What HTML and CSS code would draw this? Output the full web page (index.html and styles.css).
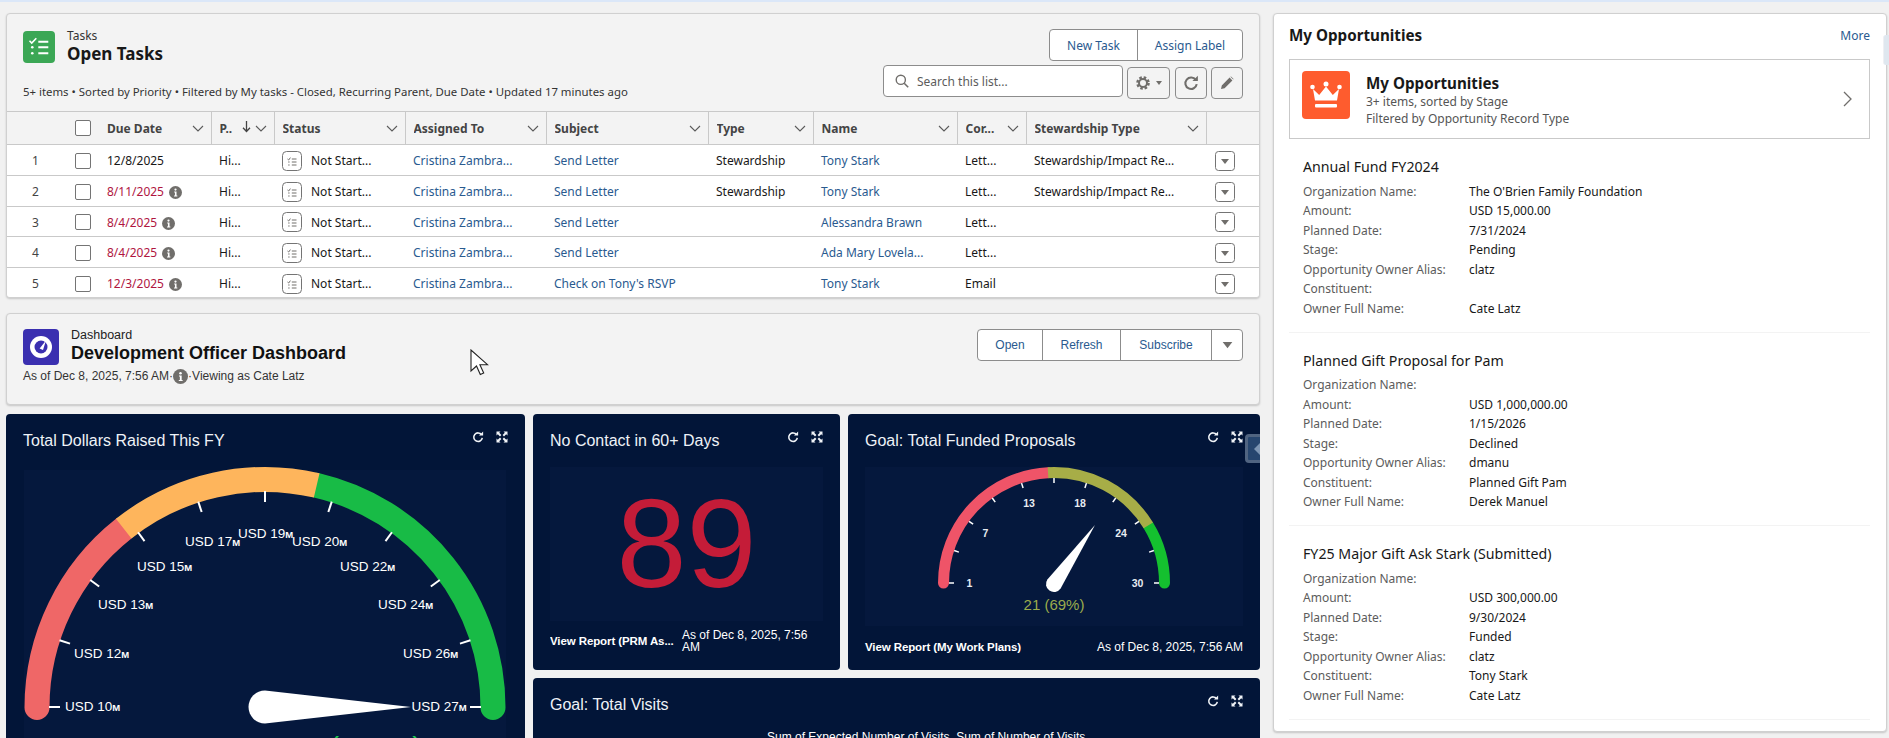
FILE: index.html
```html
<!DOCTYPE html>
<html lang="en">
<head>
<meta charset="utf-8">
<title>Home</title>
<link rel="stylesheet" href="styles.css">
</head>
<body>
<svg class="sym" width="0" height="0" aria-hidden="true">
  <symbol id="chev" viewBox="0 0 12 7"><path d="M1 1l5 5 5-5" fill="none" stroke="currentColor" stroke-width="1.1"/></symbol>
  <symbol id="refresh" viewBox="0 0 14 14"><path d="M11.2 4.4A5 5 0 1 0 12 8" fill="none" stroke="currentColor" stroke-width="1.8"/><path d="M8.2 5.2h4.8V.6z" fill="currentColor"/></symbol>
  <symbol id="expand" viewBox="0 0 12 12"><path d="M.5.5h4L3.2 1.8 5.4 4 4 5.4 1.8 3.2.5 4.5zM11.500.5v4L10.200 3.200 8 5.400 6.600 4 8.800 1.800 7.500.5zM.5 11.500v-4l1.300 1.300L4 6.600 5.400 8 3.200 10.200 4.500 11.500zM11.500 11.500h-4l1.300-1.300L6.600 8 8 6.600l2.200 2.200 1.300-1.300z" fill="currentColor"/></symbol>
  <symbol id="info" viewBox="0 0 14 14"><circle cx="7" cy="7" r="7" fill="#706e6b"/><circle cx="7" cy="3.900" r="1.200" fill="#fff"/><path d="M5.600 6h2.500v4.200H9v1.100H5.400v-1.100h1V7.100H5.600z" fill="#fff"/></symbol>
  <symbol id="stat" viewBox="0 0 20 20"><rect x=".5" y=".5" width="19" height="19" rx="4" fill="#fff" stroke="#747474"/><path d="M5.500 8l1.200 1 1.700-2.400M9.800 8h4.700M9.800 11h4.700M9.800 14h4.700M6.200 11h1.400M6.200 14h1.400" fill="none" stroke="#706e6b" stroke-width="1"/></symbol>
  <symbol id="caret" viewBox="0 0 20 20"><rect x=".5" y=".5" width="19" height="19" rx="3" fill="#fff" stroke="#747474"/><path d="M6 8h8l-4 5z" fill="#706e6b"/></symbol>
</svg>

<div class="page">
  <main class="left">
    <section class="card tasks">
      <header class="tasks-head">
        <div class="tasks-title">
          <div class="title-row">
            <svg class="app-icon" viewBox="0 0 32 32"><rect width="32" height="32" rx="4" fill="#3ba755"/><path d="M6.500 9.800l2.200 2.200 4.600-4.800" fill="none" stroke="#fff" stroke-width="1.600"/><path d="M15.300 10.700h10M15.300 16.300h10M15.300 22.300h10" stroke="#fff" stroke-width="2"/><circle cx="9.300" cy="16.300" r="1.300" fill="#fff"/><circle cx="9.300" cy="22.300" r="1.300" fill="#fff"/></svg>
            <div class="title-text">
              <div class="eyebrow">Tasks</div>
              <h1 class="tasks-name">Open Tasks</h1>
            </div>
          </div>
          <p class="tasks-meta">5+ items • Sorted by Priority • Filtered by My tasks - Closed, Recurring Parent, Due Date • Updated 17 minutes ago</p>
        </div>
        <div class="tasks-tools">
          <div class="btn-group">
            <a class="btn w-new">New Task</a><a class="btn w-assign">Assign Label</a>
          </div>
          <div class="tool-row">
            <div class="search">
              <svg class="search-ico" viewBox="0 0 14 14"><circle cx="5.800" cy="5.800" r="4.600" fill="none" stroke="#706e6b" stroke-width="1.400"/><path d="M9.200 9.200l4 4" stroke="#706e6b" stroke-width="1.600"/></svg>
              <span>Search this list...</span>
            </div>
            <div class="icon-btn gear">
              <svg class="ico16" viewBox="0 0 16 16"><circle cx="8" cy="8" r="5.500" fill="none" stroke="#706e6b" stroke-width="2.600" stroke-dasharray="2.500 1.820"/><circle cx="8" cy="8" r="4" fill="none" stroke="#706e6b" stroke-width="2"/></svg>
              <svg class="mini-caret" viewBox="0 0 8 5"><path d="M1 0h6L4 4z" fill="#706e6b"/></svg>
            </div>
            <div class="icon-btn refresh-btn"><svg class="ico16 grey"><use href="#refresh"/></svg></div>
            <div class="icon-btn edit-btn"><svg class="ico14" viewBox="0 0 14 14"><path d="M1 13l.8-3.600L9.600 1.600l2.800 2.800-7.800 7.800zM10.400.8l.6-.4 2.600 2.600-.4.6z" fill="#706e6b"/></svg></div>
          </div>
        </div>
      </header>

      <table class="grid">
        <colgroup>
          <col class="c-num"><col class="c-chk"><col class="c-due"><col class="c-pri"><col class="c-sta"><col class="c-asg"><col class="c-sub"><col class="c-typ"><col class="c-nam"><col class="c-cor"><col class="c-ste"><col class="c-act">
        </colgroup>
        <thead>
          <tr>
            <th></th>
            <th class="chk"><span class="box"></span></th>
            <th class="plain"><div class="th"><span>Due Date</span><svg class="chev"><use href="#chev"/></svg></div></th>
            <th><div class="th"><span>P..</span><svg class="sort" viewBox="0 0 9 12"><path d="M4.500 0v10M1 6.800l3.500 3.700L8 6.800" fill="none" stroke="#444" stroke-width="1.300"/></svg><svg class="chev"><use href="#chev"/></svg></div></th>
            <th><div class="th"><span>Status</span><svg class="chev"><use href="#chev"/></svg></div></th>
            <th><div class="th"><span>Assigned To</span><svg class="chev"><use href="#chev"/></svg></div></th>
            <th><div class="th"><span>Subject</span><svg class="chev"><use href="#chev"/></svg></div></th>
            <th><div class="th"><span>Type</span><svg class="chev"><use href="#chev"/></svg></div></th>
            <th><div class="th"><span>Name</span><svg class="chev"><use href="#chev"/></svg></div></th>
            <th><div class="th"><span>Cor...</span><svg class="chev"><use href="#chev"/></svg></div></th>
            <th><div class="th"><span>Stewardship Type</span><svg class="chev"><use href="#chev"/></svg></div></th>
            <th></th>
          </tr>
        </thead>
        <tbody>
          <tr>
            <td class="num">1</td><td class="chk"><span class="box"></span></td><td class="due">12/8/2025</td><td class="cell">Hi...</td>
            <td class="cell"><span class="status"><svg class="ico20"><use href="#stat"/></svg>Not Start...</span></td>
            <td class="cell"><a class="lnk">Cristina Zambra...</a></td><td class="cell"><a class="lnk">Send Letter</a></td><td class="cell">Stewardship</td>
            <td class="cell"><a class="lnk">Tony Stark</a></td><td class="cell">Lett...</td><td class="cell">Stewardship/Impact Re...</td><td class="act"><svg class="ico20"><use href="#caret"/></svg></td>
          </tr>
          <tr>
            <td class="num">2</td><td class="chk"><span class="box"></span></td><td class="due late">8/11/2025<svg class="info"><use href="#info"/></svg></td><td class="cell">Hi...</td>
            <td class="cell"><span class="status"><svg class="ico20"><use href="#stat"/></svg>Not Start...</span></td>
            <td class="cell"><a class="lnk">Cristina Zambra...</a></td><td class="cell"><a class="lnk">Send Letter</a></td><td class="cell">Stewardship</td>
            <td class="cell"><a class="lnk">Tony Stark</a></td><td class="cell">Lett...</td><td class="cell">Stewardship/Impact Re...</td><td class="act"><svg class="ico20"><use href="#caret"/></svg></td>
          </tr>
          <tr class="short">
            <td class="num">3</td><td class="chk"><span class="box"></span></td><td class="due late">8/4/2025<svg class="info"><use href="#info"/></svg></td><td class="cell">Hi...</td>
            <td class="cell"><span class="status"><svg class="ico20"><use href="#stat"/></svg>Not Start...</span></td>
            <td class="cell"><a class="lnk">Cristina Zambra...</a></td><td class="cell"><a class="lnk">Send Letter</a></td><td class="cell"></td>
            <td class="cell"><a class="lnk">Alessandra Brawn</a></td><td class="cell">Lett...</td><td class="cell"></td><td class="act"><svg class="ico20"><use href="#caret"/></svg></td>
          </tr>
          <tr>
            <td class="num">4</td><td class="chk"><span class="box"></span></td><td class="due late">8/4/2025<svg class="info"><use href="#info"/></svg></td><td class="cell">Hi...</td>
            <td class="cell"><span class="status"><svg class="ico20"><use href="#stat"/></svg>Not Start...</span></td>
            <td class="cell"><a class="lnk">Cristina Zambra...</a></td><td class="cell"><a class="lnk">Send Letter</a></td><td class="cell"></td>
            <td class="cell"><a class="lnk">Ada Mary Lovela...</a></td><td class="cell">Lett...</td><td class="cell"></td><td class="act"><svg class="ico20"><use href="#caret"/></svg></td>
          </tr>
          <tr class="last">
            <td class="num">5</td><td class="chk"><span class="box"></span></td><td class="due late">12/3/2025<svg class="info"><use href="#info"/></svg></td><td class="cell">Hi...</td>
            <td class="cell"><span class="status"><svg class="ico20"><use href="#stat"/></svg>Not Start...</span></td>
            <td class="cell"><a class="lnk">Cristina Zambra...</a></td><td class="cell"><a class="lnk">Check on Tony's RSVP</a></td><td class="cell"></td>
            <td class="cell"><a class="lnk">Tony Stark</a></td><td class="cell">Email</td><td class="cell"></td><td class="act"><svg class="ico20"><use href="#caret"/></svg></td>
          </tr>
        </tbody>
      </table>
    </section>

    <section class="card dash-head">
      <div class="dash-title">
        <div class="title-row">
          <svg class="dash-icon" viewBox="0 0 36 36"><rect width="36" height="36" rx="4" fill="#3a2fb0"/><circle cx="18" cy="18" r="11" fill="#fff"/><circle cx="18" cy="18" r="6.500" fill="#3a2fb0"/><path d="M23 11.500l-3 9.500-3.400-1.500z" fill="#fff"/></svg>
          <div class="dash-text">
            <div class="dash-eyebrow">Dashboard</div>
            <h2 class="dash-name">Development Officer Dashboard</h2>
          </div>
        </div>
        <p class="dash-meta">As of Dec 8, 2025, 7:56 AM·<svg class="info dash-info"><use href="#info"/></svg>·Viewing as Cate Latz</p>
      </div>
      <div class="btn-group arial">
        <a class="btn w-open">Open</a><a class="btn w-refresh">Refresh</a><a class="btn w-sub">Subscribe</a><a class="btn w-more"><svg class="mini-caret big" viewBox="0 0 8 5"><path d="M.5 0h7L4 4.500z" fill="#706e6b"/></svg></a>
      </div>
    </section>

    <section class="widgets">
      <article class="widget w1">
        <header class="w-head"><h3>Total Dollars Raised This FY</h3><div class="w-icons"><svg class="wi"><use href="#refresh"/></svg><svg class="wi"><use href="#expand"/></svg></div></header>
        <svg class="gauge" viewBox="6 466 519 272">
          <rect class="panel" x="24" y="470" width="482" height="268"/>
          <path d="M37 707.500A228 228 0 0 1 123.700 528.600" class="arc a-red" stroke-linecap="round"/>
          <path d="M316.700 485.400A228 228 0 0 1 493 707.500" class="arc a-green" stroke-linecap="round"/>
          <path d="M123.700 528.600A228 228 0 0 1 316.700 485.400" class="arc a-orange"/>
          <g class="ticks">
            <line x1="265" y1="491" x2="265" y2="502" transform="rotate(-90 265 707)"/>
            <line x1="265" y1="491" x2="265" y2="502" transform="rotate(-72 265 707)"/>
            <line x1="265" y1="491" x2="265" y2="502" transform="rotate(-54 265 707)"/>
            <line x1="265" y1="491" x2="265" y2="502" transform="rotate(-36 265 707)"/>
            <line x1="265" y1="491" x2="265" y2="502" transform="rotate(-18 265 707)"/>
            <line x1="265" y1="491" x2="265" y2="502"/>
            <line x1="265" y1="491" x2="265" y2="502" transform="rotate(18 265 707)"/>
            <line x1="265" y1="491" x2="265" y2="502" transform="rotate(36 265 707)"/>
            <line x1="265" y1="491" x2="265" y2="502" transform="rotate(54 265 707)"/>
            <line x1="265" y1="491" x2="265" y2="502" transform="rotate(72 265 707)"/>
            <line x1="265" y1="491" x2="265" y2="502" transform="rotate(90 265 707)"/>
          </g>
          <path d="M411 707L265 690.500A16.500 16.500 0 0 0 265 723.500Z" fill="#fff"/>
          <g class="g1-labels">
            <text x="65" y="711">USD 10<tspan class="m">M</tspan></text>
            <text x="74" y="658">USD 12<tspan class="m">M</tspan></text>
            <text x="98" y="609">USD 13<tspan class="m">M</tspan></text>
            <text x="137" y="571">USD 15<tspan class="m">M</tspan></text>
            <text x="185" y="546">USD 17<tspan class="m">M</tspan></text>
            <text x="238" y="538">USD 19<tspan class="m">M</tspan></text>
            <text x="292" y="546">USD 20<tspan class="m">M</tspan></text>
            <text x="340" y="571">USD 22<tspan class="m">M</tspan></text>
            <text x="378" y="609">USD 24<tspan class="m">M</tspan></text>
            <text x="403" y="658">USD 26<tspan class="m">M</tspan></text>
            <text x="411.500" y="711">USD 27<tspan class="m">M</tspan></text>
          </g>
          <text x="262.500" y="757.500" class="g1-value">USD 27,446,205 (113%)</text>
        </svg>
      </article>

      <article class="widget w2">
        <header class="w-head"><h3>No Contact in 60+ Days</h3><div class="w-icons"><svg class="wi"><use href="#refresh"/></svg><svg class="wi"><use href="#expand"/></svg></div></header>
        <div class="metric">89</div>
        <footer class="w-foot"><span class="report trunc">View Report (PRM As...</span><span class="asof wrap">As of Dec 8, 2025, 7:56 AM</span></footer>
      </article>

      <article class="widget w3">
        <header class="w-head"><h3>Goal: Total Funded Proposals</h3><div class="w-icons"><svg class="wi"><use href="#refresh"/></svg><svg class="wi"><use href="#expand"/></svg></div></header>
        <svg class="gauge2" viewBox="848 466 412 160">
          <rect class="panel" x="865" y="467" width="378" height="159"/>
          <path d="M943.500 583A110.500 110.500 0 0 1 1048 472.700" class="arc2 a2-red" stroke-linecap="round"/>
          <path d="M1148.300 525.400A110.500 110.500 0 0 1 1164.500 583" class="arc2 a2-green" stroke-linecap="round"/>
          <path d="M1048 472.700A110.500 110.500 0 0 1 1148.300 525.400" class="arc2 a2-olive"/>
          <g class="ticks2">
            <line x1="1054" y1="478" x2="1054" y2="483" transform="rotate(-90 1054 583)"/>
            <line x1="1054" y1="478" x2="1054" y2="483" transform="rotate(-72 1054 583)"/>
            <line x1="1054" y1="478" x2="1054" y2="483" transform="rotate(-54 1054 583)"/>
            <line x1="1054" y1="478" x2="1054" y2="483" transform="rotate(-36 1054 583)"/>
            <line x1="1054" y1="478" x2="1054" y2="483" transform="rotate(-18 1054 583)"/>
            <line x1="1054" y1="478" x2="1054" y2="483"/>
            <line x1="1054" y1="478" x2="1054" y2="483" transform="rotate(18 1054 583)"/>
            <line x1="1054" y1="478" x2="1054" y2="483" transform="rotate(36 1054 583)"/>
            <line x1="1054" y1="478" x2="1054" y2="483" transform="rotate(54 1054 583)"/>
            <line x1="1054" y1="478" x2="1054" y2="483" transform="rotate(72 1054 583)"/>
            <line x1="1054" y1="478" x2="1054" y2="483" transform="rotate(90 1054 583)"/>
          </g>
          <path d="M1095 525L1060.600 588.600A8 8 0 0 1 1047.400 579.400Z" fill="#fff"/>
          <g class="g2-labels">
            <text x="969.500" y="587">1</text>
            <text x="985.500" y="537">7</text>
            <text x="1029" y="507">13</text>
            <text x="1080" y="507">18</text>
            <text x="1121" y="537">24</text>
            <text x="1137.500" y="587">30</text>
          </g>
          <text x="1054" y="609.500" class="g2-value">21 (69%)</text>
        </svg>
        <footer class="w-foot split"><span class="report">View Report (My Work Plans)</span><span class="asof">As of Dec 8, 2025, 7:56 AM</span></footer>
        <div class="side-tab"><svg class="tab-arrow" viewBox="0 0 6 12"><path d="M6 0v12L0 6z" fill="#7d95b3"/></svg></div>
      </article>

      <article class="widget w4">
        <header class="w-head"><h3>Goal: Total Visits</h3><div class="w-icons"><svg class="wi"><use href="#refresh"/></svg><svg class="wi"><use href="#expand"/></svg></div></header>
        <div class="legend">Sum of Expected Number of Visits, Sum of Number of Visits</div>
      </article>
    </section>
  </main>

  <aside class="card opp">
    <header class="opp-head"><h2>My Opportunities</h2><a class="lnk">More</a></header>
    <div class="opp-box">
      <svg class="crown" viewBox="0 0 48 48"><rect width="48" height="48" rx="4" fill="#fe5c2e"/><path d="M11 18l6.200 6L24 15.500 30.800 24l6.200-6-2 11.500H13z" fill="#fff"/><circle cx="10.500" cy="16" r="2.300" fill="#fff"/><circle cx="24" cy="13" r="2.500" fill="#fff"/><circle cx="37.500" cy="16" r="2.300" fill="#fff"/><rect x="13" y="33" width="22" height="3.500" rx="1" fill="#fff"/></svg>
      <div class="opp-box-text">
        <div class="opp-box-title">My Opportunities</div>
        <div class="opp-box-sub">3+ items, sorted by Stage</div>
        <div class="opp-box-sub">Filtered by Opportunity Record Type</div>
      </div>
      <svg class="opp-chev" viewBox="0 0 9 16"><path d="M1 1l7 7-7 7" fill="none" stroke="#706e6b" stroke-width="1.300"/></svg>
    </div>

    <article class="opp-item">
      <h3>Annual Fund FY2024</h3>
      <dl>
        <dt>Organization Name:</dt><dd>The O'Brien Family Foundation</dd>
        <dt>Amount:</dt><dd>USD 15,000.00</dd>
        <dt>Planned Date:</dt><dd>7/31/2024</dd>
        <dt>Stage:</dt><dd>Pending</dd>
        <dt>Opportunity Owner Alias:</dt><dd>clatz</dd>
        <dt>Constituent:</dt><dd></dd>
        <dt>Owner Full Name:</dt><dd>Cate Latz</dd>
      </dl>
    </article>
    <article class="opp-item">
      <h3>Planned Gift Proposal for Pam</h3>
      <dl>
        <dt>Organization Name:</dt><dd></dd>
        <dt>Amount:</dt><dd>USD 1,000,000.00</dd>
        <dt>Planned Date:</dt><dd>1/15/2026</dd>
        <dt>Stage:</dt><dd>Declined</dd>
        <dt>Opportunity Owner Alias:</dt><dd>dmanu</dd>
        <dt>Constituent:</dt><dd>Planned Gift Pam</dd>
        <dt>Owner Full Name:</dt><dd>Derek Manuel</dd>
      </dl>
    </article>
    <article class="opp-item">
      <h3>FY25 Major Gift Ask Stark (Submitted)</h3>
      <dl>
        <dt>Organization Name:</dt><dd></dd>
        <dt>Amount:</dt><dd>USD 300,000.00</dd>
        <dt>Planned Date:</dt><dd>9/30/2024</dd>
        <dt>Stage:</dt><dd>Funded</dd>
        <dt>Opportunity Owner Alias:</dt><dd>clatz</dd>
        <dt>Constituent:</dt><dd>Tony Stark</dd>
        <dt>Owner Full Name:</dt><dd>Cate Latz</dd>
      </dl>
    </article>
  </aside>
</div>

<div class="edge-tab"></div>
<svg class="cursor" viewBox="0 0 19 27"><path d="M1 1v21l5.500-5 3.800 8.500 3.400-1.500-3.800-8.300H17.500z" fill="#fff" stroke="#222" stroke-width="1.100"/></svg>
</body>
</html>
```

FILE: styles.css
```css
* { box-sizing: border-box; }
html, body { margin: 0; height: 738px; overflow: hidden; }
body {
  background: #f1f1f1;
  border-top: 2px solid #dbe7f8;
  font-family: "Noto Sans", "Open Sans", sans-serif;
  font-size: 12px;
  color: #181818;
  position: relative;
}
h1, h2, h3, p, dl, dd { margin: 0; }
a { text-decoration: none; }
.sym { position: absolute; }

.page {
  display: grid;
  grid-template-columns: 1254px 614px;
  column-gap: 13px;
  padding: 11px 0 0 6px;
}
.left { display: flex; flex-direction: column; min-width: 0; }
.card {
  border: 1px solid #d0d0d0;
  border-radius: 4px;
  box-shadow: 0 1px 2px rgba(0, 0, 0, .18);
}

/* tasks */
.tasks { background: #f3f3f3; height: 285px; overflow: hidden; }
.tasks-head { display: flex; justify-content: space-between; height: 97px; padding: 15px 16px 0 16px; }
.tasks-title { padding-top: 2px; }
.title-row { display: flex; }
.app-icon { width: 32px; height: 32px; flex: none; margin-right: 12px; }
.title-text { margin-top: -2px; }
.eyebrow { font-size: 12px; line-height: 14px; color: #333; }
.tasks-name { font-size: 17px; line-height: 21px; font-weight: 700; }
.tasks-meta { margin-top: 20px; line-height: 16px; color: #333; font-size: 11.400px; }
.tasks-tools { display: flex; flex-direction: column; align-items: flex-end; }
.btn-group { display: flex; height: 32px; background: #fff; border: 1px solid #8c8c8c; border-radius: 4px; }
.btn { display: flex; align-items: center; justify-content: center; color: #2a5a8f; border-left: 1px solid #8c8c8c; font-size: 12px; }
.btn:first-child { border-left: 0; }
.w-new { width: 87px; }
.w-assign { width: 105px; }
.tool-row { display: flex; margin-top: 4px; }
.search {
  display: flex; align-items: center;
  width: 240px; height: 32px;
  background: #fff; border: 1px solid #8c8c8c; border-radius: 4px;
  padding-left: 11px; color: #5c5c5c;
}
.search-ico { width: 14px; height: 14px; margin-right: 8px; }
.icon-btn {
  display: flex; align-items: center; justify-content: center;
  height: 32px; margin-top: 2px;
  background: #f3f3f3; border: 1px solid #8c8c8c; border-radius: 4px;
}
.gear { width: 43px; margin-left: 4px; }
.refresh-btn { width: 32px; margin-left: 5px; }
.edit-btn { width: 32px; margin-left: 4px; }
.ico16 { width: 16px; height: 16px; }
.ico14 { width: 14px; height: 14px; }
.grey { color: #706e6b; }
.mini-caret { width: 8px; height: 5px; margin-left: 4px; }
.mini-caret.big { width: 11px; height: 7px; margin-left: 0; }

/* table */
.grid { width: 1252px; table-layout: fixed; border-collapse: collapse; border-top: 1px solid #c9c9c9; }
.c-num { width: 61px; } .c-chk { width: 33px; } .c-due { width: 110px; } .c-pri { width: 63px; }
.c-sta { width: 131px; } .c-asg { width: 141px; } .c-sub { width: 162px; } .c-typ { width: 105px; }
.c-nam { width: 144px; } .c-cor { width: 69px; } .c-ste { width: 180px; } .c-act { width: 53px; }
.grid th { height: 33px; padding: 0; background: #f3f3f3; border-left: 1px solid #c9c9c9; border-bottom: 1px solid #c9c9c9; font-weight: 700; font-size: 12px; color: #444; text-align: left; }
.grid th:first-child, .grid th.chk, .grid th.plain { border-left: 0; }
.grid th:last-child { border-left: 1px solid #c9c9c9; }
.th { display: flex; align-items: center; padding: 1px 7px 0 8px; }
.plain .th { padding-left: 6px; padding-right: 7px; }
.th span:first-child { flex: 1; white-space: nowrap; overflow: hidden; }
.sort { width: 9px; height: 12px; margin: -3px 4px 0 0; flex: none; }
.chev { width: 12px; height: 7px; color: #5c5c5c; flex: none; }
.grid td { height: 31px; padding: 1px 0 0; background: #fff; border-bottom: 1px solid #c9c9c9; white-space: nowrap; overflow: hidden; }
.grid tr.short td { height: 30px; }
.grid tr.last td { border-bottom: 0; }
.num { text-align: center; padding-right: 4px !important; color: #444; }
.chk { padding-left: 7px !important; }
.box { display: block; width: 16px; height: 16px; background: #fff; border: 1px solid #747474; border-radius: 2px; }
.due { padding-left: 6px !important; }
.late { color: #b0163f; }
.info { width: 13px; height: 13px; margin-left: 5px; vertical-align: -3px; }
.cell { padding-left: 8px !important; }
.status { display: flex; align-items: center; }
.ico20 { width: 20px; height: 20px; flex: none; display: block; }
.status .ico20 { margin-right: 9px; }
.act { padding-left: 9px !important; }
.lnk { color: #2a5a8f; }

/* dashboard header */
.dash-head {
  display: flex; justify-content: space-between;
  margin-top: 15px; height: 92px;
  background: #f3f3f3;
  padding: 15px 16px 0 16px;
  font-family: "Liberation Sans", Arial, sans-serif;
}
.dash-icon { width: 36px; height: 36px; flex: none; margin-right: 12px; }
.dash-text { margin-top: -1px; }
.dash-eyebrow { font-size: 12.500px; line-height: 14px; color: #222; }
.dash-name { font-size: 18px; line-height: 22px; font-weight: 700; color: #111; }
.dash-meta { margin-top: 3px; display: flex; align-items: center; line-height: 16px; color: #333; font-size: 12px; }
.dash-info { width: 15px; height: 15px; margin: 0; vertical-align: 0; }
.arial .btn { font-size: 12px; }
.w-open { width: 64px; } .w-refresh { width: 78px; } .w-sub { width: 91px; } .w-more { width: 31px; }

/* widgets */
.widgets {
  display: grid;
  grid-template-columns: 519px 307px 412px;
  grid-template-rows: 256px 60px;
  gap: 8px;
  margin-top: 9px;
  height: 324px;
  color: #fff;
  font-family: "Liberation Sans", Arial, sans-serif;
}
.widget { position: relative; background: #021538; border-radius: 4px 4px 0 0; display: flex; flex-direction: column; overflow: hidden; }
.w2, .w3 { border-radius: 4px; }
.w1 { grid-row: 1 / span 2; }
.w4 { grid-column: 2 / span 2; }
.w-head { display: flex; justify-content: space-between; height: 52px; flex: none; padding: 17px 17px 0 17px; }
.w-head h3 { margin: 1px 0 0; font-size: 16px; line-height: 18px; font-weight: 400; color: #eef2f7; }
.w-icons { display: flex; column-gap: 12px; }
.wi { width: 12px; height: 12px; color: #f0f3f7; }
.gauge { display: block; width: 519px; height: 272px; }
.gauge2 { display: block; width: 412px; height: 160px; flex: none; }
.panel { fill: #05183d; }
.arc { fill: none; stroke-width: 25; }
.a-red { stroke: #ef6767; } .a-orange { stroke: #feb55c; } .a-green { stroke: #18bb46; }
.ticks line { stroke: #fff; stroke-width: 2; }
.g1-labels text { fill: #fff; font-size: 13.500px; }
.m { font-size: 9.500px; font-weight: 700; }
.g1-value { fill: #1ec84f; font-size: 29.500px; font-weight: 400; text-anchor: middle; }
.arc2 { fill: none; stroke-width: 11; }
.a2-red { stroke: #ef5468; } .a2-olive { stroke: #a7ad47; } .a2-green { stroke: #14c02f; }
.ticks2 line { stroke: #fff; stroke-width: 1.500; }
.g2-labels text { fill: #e8ecf2; font-size: 10.500px; font-weight: 700; text-anchor: middle; }
.g2-value { fill: #9bab4c; font-size: 15px; text-anchor: middle; }
.metric {
  flex: none; height: 154px; margin: 1px 17px 0;
  background: #05183d;
  display: flex; align-items: center; justify-content: center;
  font-size: 126px; line-height: 1; color: #c41c38;
}
.w-foot { margin-top: auto; padding: 0 17px 17px; display: flex; align-items: center; column-gap: 6px; font-size: 12px; line-height: 12px; }
.split { justify-content: space-between; }
.report { font-weight: 700; font-size: 11.500px; letter-spacing: -.1px; }
.trunc { flex: none; width: 126px; white-space: nowrap; overflow: hidden; }
.wrap { width: 141px; flex: none; }
.asof { font-weight: 400; }
.legend { padding-left: 234px; font-size: 12px; line-height: 14px; white-space: nowrap; }
.side-tab {
  position: absolute; right: 0; top: 20px;
  width: 15px; height: 29px;
  background: #27466f; border: 3px solid #506481; border-right: 0;
  border-radius: 4px 0 0 4px;
  display: flex; align-items: center; justify-content: flex-end;
}
.tab-arrow { width: 6px; height: 12px; }

/* right card */
.opp { background: #fff; height: 719px; padding: 0 16px 0 15px; overflow: hidden; }
.opp-head { display: flex; justify-content: space-between; align-items: center; height: 45px; padding-bottom: 3px; }
.opp-head h2 { font-size: 15.200px; line-height: 20px; font-weight: 700; }
.opp-head .lnk { font-size: 12px; }
.opp-box { display: flex; align-items: flex-start; height: 80px; border: 1px solid #c9c9c9; padding: 11px 17px 0 12px; }
.crown { width: 48px; height: 48px; flex: none; margin-right: 16px; }
.opp-box-text { flex: 1; margin-top: 2px; }
.opp-box-title { font-size: 15.200px; line-height: 20px; font-weight: 700; }
.opp-box-sub { font-size: 12px; line-height: 17px; color: #555; }
.opp-chev { width: 9px; height: 16px; flex: none; align-self: center; margin-top: -11px; }
.opp-item { padding: 17px 0 13.500px 14px; border-bottom: 1px solid #f3f3f3; }
.opp-item h3 { font-size: 14.200px; line-height: 22px; font-weight: 400; margin-bottom: 3.500px; }
.opp-item dl { display: grid; grid-template-columns: 166px 1fr; grid-auto-rows: 19.500px; line-height: 19.500px; }
.opp-item dt { color: #5c5c5c; }
.opp-item dd { color: #181818; }

/* overlays */
.edge-tab { position: absolute; right: 0; top: 33px; width: 6px; height: 30px; background: #dfe7ef; border-left: 1px solid #eef0f4; border-radius: 3px 0 0 3px; }
.cursor { position: absolute; left: 470px; top: 347px; width: 19px; height: 27px; }
```
